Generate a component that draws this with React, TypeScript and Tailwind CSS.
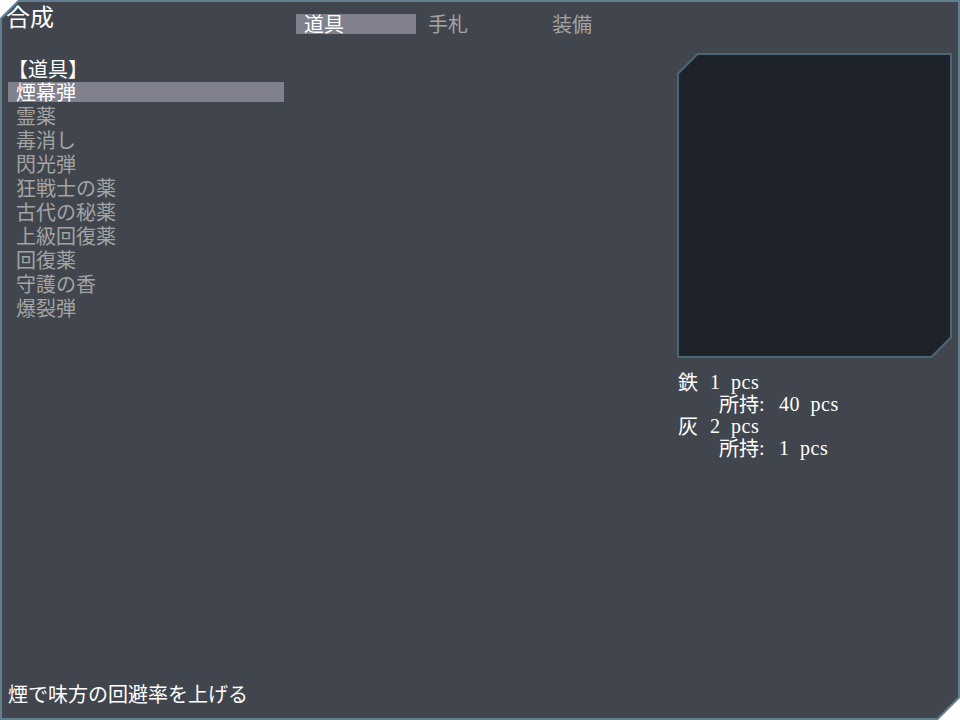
import React from "react";

const jp = "font-['Noto_Sans_CJK_JP','Noto_Sans',sans-serif]";
const latin = "font-['Liberation_Serif','Noto_Sans_CJK_JP',serif] text-[20px] [word-spacing:5px] tracking-[0.5px]";

const tabs = [
  { label: "道具", active: true },
  { label: "手札", active: false },
  { label: "装備", active: false },
];

const items = [
  "煙幕弾",
  "霊薬",
  "毒消し",
  "閃光弾",
  "狂戦士の薬",
  "古代の秘薬",
  "上級回復薬",
  "回復薬",
  "守護の香",
  "爆裂弾",
];

const materials = [
  { name: "鉄", need: "1 pcs", have: "40 pcs" },
  { name: "灰", need: "2 pcs", have: "1 pcs" },
];

const App = () => {
  const selected = 0;

  return (
    <div className={`h-[720px] w-[960px] bg-white ${jp}`}>
      <div className="h-full w-full bg-[#637e8f] p-[2px] [clip-path:polygon(18px_0,100%_0,100%_calc(100%_-_22px),calc(100%_-_22px)_100%,0_100%,0_18px)]">
        <div className="flex h-full w-full flex-col bg-[#41464e] [clip-path:polygon(17px_0,100%_0,100%_calc(100%_-_21px),calc(100%_-_21px)_100%,0_100%,0_17px)]">
          {/* header */}
          <div className="flex h-[51px] shrink-0 items-start">
            <div className="w-[294px] pl-[4px] text-[24px] leading-[28px] text-white">合成</div>
            <div className="mt-[12px] flex gap-[4px]">
              {tabs.map((t) => (
                <div
                  key={t.label}
                  className={`h-[20px] w-[120px] pl-[8px] text-[20px] leading-[20px] ${
                    t.active ? "bg-[#80808f] text-white" : "text-[#a3a3a3]"
                  }`}
                >
                  {t.label}
                </div>
              ))}
            </div>
          </div>

          {/* body */}
          <div className="flex flex-1">
            <div className="w-[282px] pl-[6px] pt-[5px]">
              <div className="h-[24px] text-[20px] leading-[22px] text-white">【道具】</div>
              {items.map((it, i) => (
                <div key={it} className="h-[24px]">
                  <div
                    className={`h-[20px] pl-[8px] text-[20px] leading-[20px] ${
                      i === selected ? "bg-[#80808f] text-white" : "text-[#a3a3a3]"
                    }`}
                  >
                    {it}
                  </div>
                </div>
              ))}
            </div>

            <div className="ml-[393px] flex flex-col">
              <div className="h-[305px] w-[275px] bg-[#4b6678] p-[2px] [clip-path:polygon(20px_0,100%_0,100%_calc(100%_-_20px),calc(100%_-_20px)_100%,0_100%,0_20px)]">
                <div className="h-full w-full bg-[#1e232a] [clip-path:polygon(19px_0,100%_0,100%_calc(100%_-_19px),calc(100%_-_19px)_100%,0_100%,0_19px)]" />
              </div>
              <div className="mt-[13px] pl-[1px] text-white">
                {materials.map((m) => (
                  <div key={m.name}>
                    <div className="flex h-[22px] items-center text-[20px] leading-[22px]">
                      <span className="w-[32px]">{m.name}</span>
                      <span className={latin}>{m.need}</span>
                    </div>
                    <div className="flex h-[22px] items-center pl-[41px] text-[20px] leading-[22px]">
                      <span className="w-[40px]">所持</span>
                      <span className={`${latin} w-[20px]`}>:</span>
                      <span className={latin}>{m.have}</span>
                    </div>
                  </div>
                ))}
              </div>
            </div>
          </div>

          {/* description */}
          <div className="h-[36px] shrink-0 pl-[6px] text-[20px] leading-[24px] text-white">
            煙で味方の回避率を上げる
          </div>
        </div>
      </div>
    </div>
  );
};

export default App;
